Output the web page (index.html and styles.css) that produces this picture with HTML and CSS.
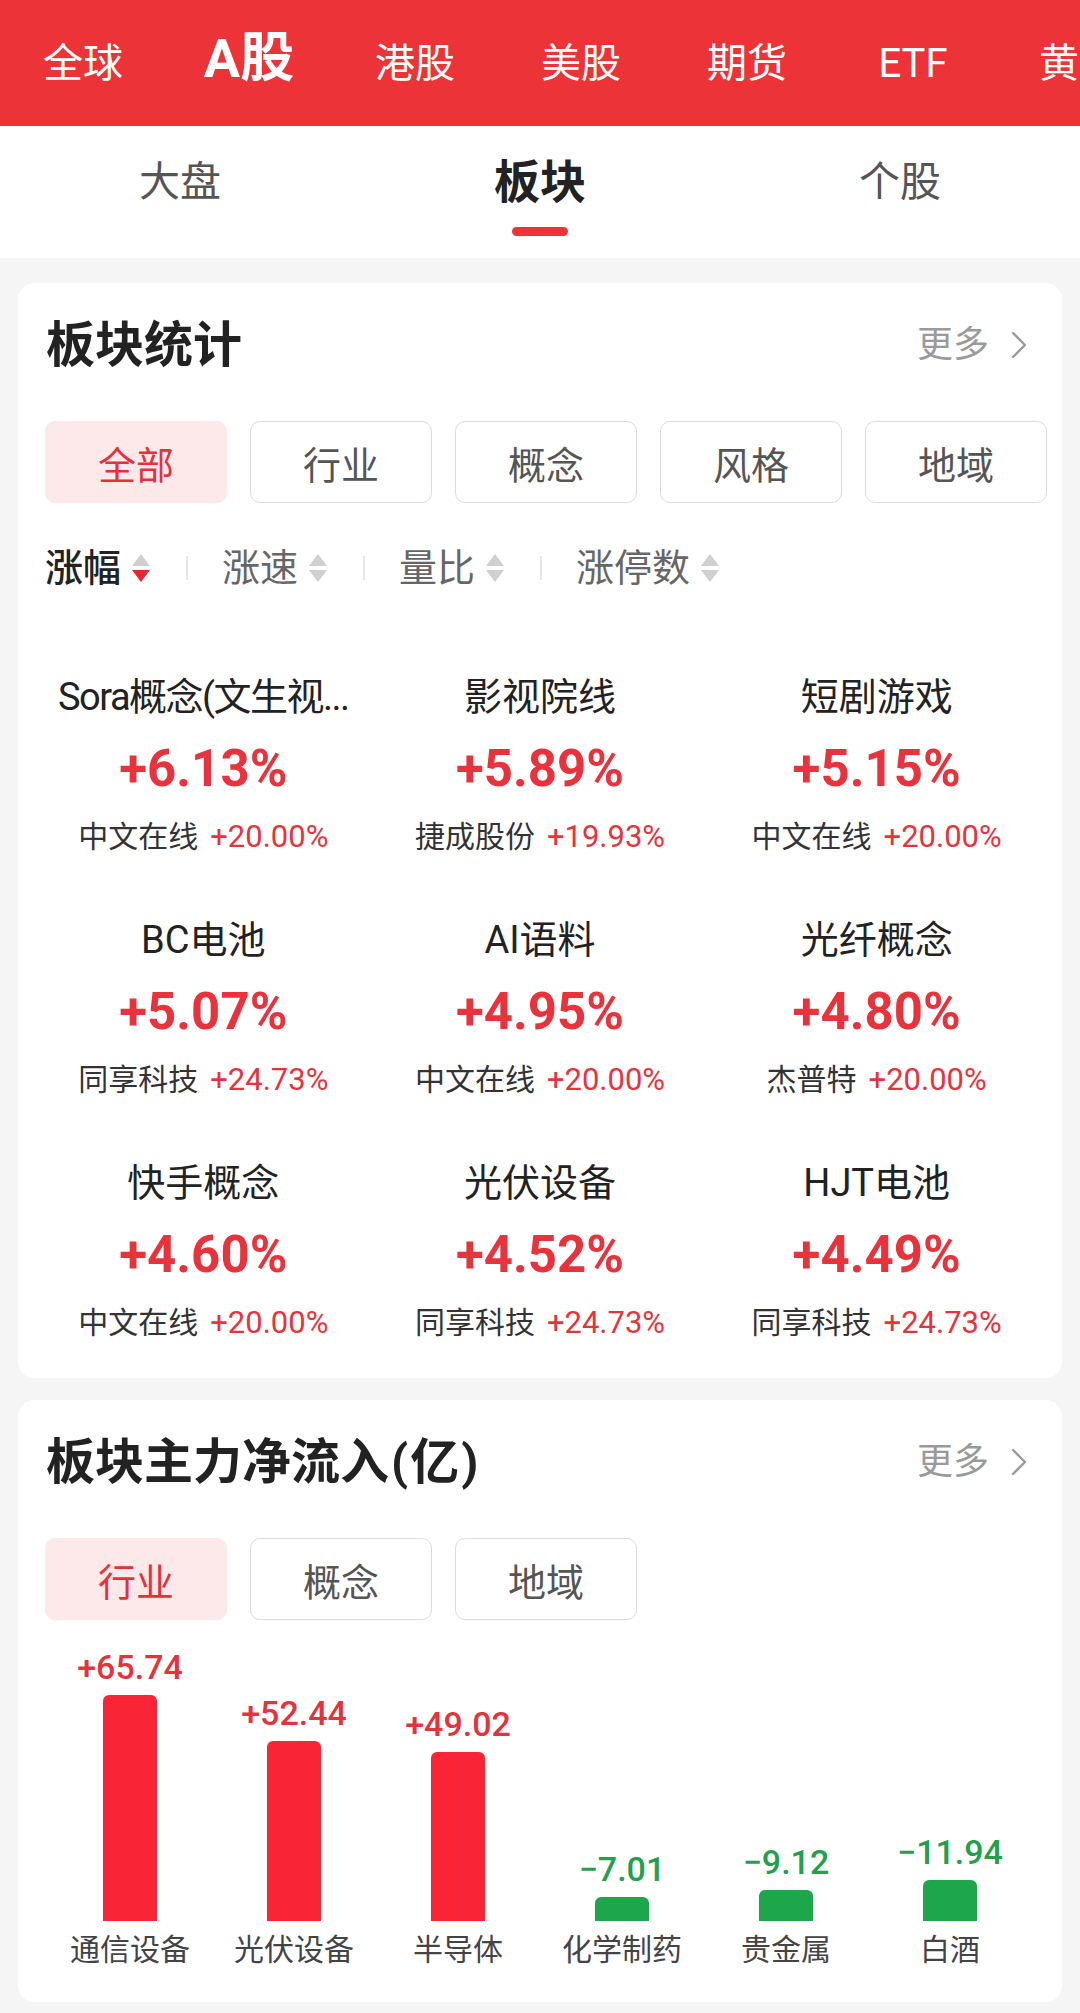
FILE: index.html
```html
<!DOCTYPE html>
<html lang="zh-CN">
<head>
<meta charset="utf-8">
<title>板块</title>
<link rel="stylesheet" href="styles.css">
</head>
<body>
<header class="market-tabs">
  <span class="mt">全球</span>
  <span class="mt mt-active">A股</span>
  <span class="mt">港股</span>
  <span class="mt">美股</span>
  <span class="mt">期货</span>
  <span class="mt">ETF</span>
  <span class="mt">黄金</span>
</header>

<nav class="sub-tabs">
  <div class="st"><span class="st-label">大盘</span></div>
  <div class="st st-active"><span class="st-label">板块</span><i class="st-bar"></i></div>
  <div class="st"><span class="st-label">个股</span></div>
</nav>

<section class="card">
  <div class="card-head">
    <h2 class="card-title">板块统计</h2>
    <span class="more">更多<svg class="chev" width="16" height="28" viewBox="0 0 16 28"><path d="M2 2 L14 14 L2 26" fill="none" stroke="#9a9a9a" stroke-width="2.4" stroke-linecap="round" stroke-linejoin="round"/></svg></span>
  </div>
  <div class="chips">
    <span class="chip chip-on">全部</span>
    <span class="chip">行业</span>
    <span class="chip">概念</span>
    <span class="chip">风格</span>
    <span class="chip">地域</span>
  </div>
  <div class="sorts">
    <span class="sort sort-on">涨幅<svg class="arrows" width="20" height="32" viewBox="0 0 20 32"><path d="M10 2 L19 14 L1 14 Z" fill="#cfcfcf"/><path d="M1 18 L19 18 L10 30 Z" fill="#e8262f"/></svg></span>
    <i class="sep"></i>
    <span class="sort">涨速<svg class="arrows" width="20" height="32" viewBox="0 0 20 32"><path d="M10 2 L19 14 L1 14 Z" fill="#cfcfcf"/><path d="M1 18 L19 18 L10 30 Z" fill="#cfcfcf"/></svg></span>
    <i class="sep"></i>
    <span class="sort">量比<svg class="arrows" width="20" height="32" viewBox="0 0 20 32"><path d="M10 2 L19 14 L1 14 Z" fill="#cfcfcf"/><path d="M1 18 L19 18 L10 30 Z" fill="#cfcfcf"/></svg></span>
    <i class="sep"></i>
    <span class="sort">涨停数<svg class="arrows" width="20" height="32" viewBox="0 0 20 32"><path d="M10 2 L19 14 L1 14 Z" fill="#cfcfcf"/><path d="M1 18 L19 18 L10 30 Z" fill="#cfcfcf"/></svg></span>
  </div>
  <div class="grid">
    <div class="cell"><span class="name name-tight">Sora概念(文生视...</span><span class="pct">+6.13%</span><span class="sub">中文在线<b>+20.00%</b></span></div>
    <div class="cell"><span class="name">影视院线</span><span class="pct">+5.89%</span><span class="sub">捷成股份<b>+19.93%</b></span></div>
    <div class="cell"><span class="name">短剧游戏</span><span class="pct">+5.15%</span><span class="sub">中文在线<b>+20.00%</b></span></div>
    <div class="cell"><span class="name">BC电池</span><span class="pct">+5.07%</span><span class="sub">同享科技<b>+24.73%</b></span></div>
    <div class="cell"><span class="name">AI语料</span><span class="pct">+4.95%</span><span class="sub">中文在线<b>+20.00%</b></span></div>
    <div class="cell"><span class="name">光纤概念</span><span class="pct">+4.80%</span><span class="sub">杰普特<b>+20.00%</b></span></div>
    <div class="cell"><span class="name">快手概念</span><span class="pct">+4.60%</span><span class="sub">中文在线<b>+20.00%</b></span></div>
    <div class="cell"><span class="name">光伏设备</span><span class="pct">+4.52%</span><span class="sub">同享科技<b>+24.73%</b></span></div>
    <div class="cell"><span class="name">HJT电池</span><span class="pct">+4.49%</span><span class="sub">同享科技<b>+24.73%</b></span></div>
  </div>
</section>

<section class="card">
  <div class="card-head">
    <h2 class="card-title">板块主力净流入<span class="paren">(</span>亿<span class="paren">)</span></h2>
    <span class="more">更多<svg class="chev" width="16" height="28" viewBox="0 0 16 28"><path d="M2 2 L14 14 L2 26" fill="none" stroke="#9a9a9a" stroke-width="2.4" stroke-linecap="round" stroke-linejoin="round"/></svg></span>
  </div>
  <div class="chips">
    <span class="chip chip-on">行业</span>
    <span class="chip">概念</span>
    <span class="chip">地域</span>
  </div>
  <div class="chart">
    <div class="bars">
      <div class="bcol up"><span class="bval">+65.74</span><i class="bar" style="height:226px"></i></div>
      <div class="bcol up"><span class="bval">+52.44</span><i class="bar" style="height:180px"></i></div>
      <div class="bcol up"><span class="bval">+49.02</span><i class="bar" style="height:169px"></i></div>
      <div class="bcol down"><span class="bval">−7.01</span><i class="bar" style="height:24px"></i></div>
      <div class="bcol down"><span class="bval">−9.12</span><i class="bar" style="height:31px"></i></div>
      <div class="bcol down"><span class="bval">−11.94</span><i class="bar" style="height:41px"></i></div>
    </div>
    <div class="cats">
      <span class="cat">通信设备</span>
      <span class="cat">光伏设备</span>
      <span class="cat">半导体</span>
      <span class="cat">化学制药</span>
      <span class="cat">贵金属</span>
      <span class="cat">白酒</span>
    </div>
  </div>
</section>
</body>
</html>
```

FILE: styles.css
```css
body {
  margin: 0 0 11px;
  background: #f5f5f5;
  font-family: Roboto, "Noto Sans CJK SC", sans-serif;
  color: #222;
}

/* top market tabs */
.market-tabs {
  display: flex;
  align-items: baseline;
  height: 126px;
  box-sizing: border-box;
  padding: 32px 0 0 0;
  background: #ec3338;
  color: #fff;
  overflow: hidden;
  white-space: nowrap;
}
.mt {
  flex: none;
  width: 166px;
  text-align: center;
  font-size: 40px;
  line-height: 1;
}
.mt-active {
  font-size: 54px;
  font-weight: 700;
}

/* second level tabs */
.sub-tabs {
  display: flex;
  height: 132px;
  background: #fff;
}
.st {
  flex: 1;
  display: flex;
  flex-direction: column;
  align-items: center;
  padding-top: 20px;
}
.st-label {
  height: 72px;
  display: flex;
  align-items: center;
  font-size: 41px;
  line-height: 1;
  color: #555;
}
.st-active .st-label {
  font-size: 46px;
  font-weight: 700;
  color: #222;
}
.st-bar {
  width: 56px;
  height: 9px;
  border-radius: 5px;
  background: #ec3338;
  margin-top: 9px;
}

/* cards */
.card {
  margin: 25px 18px 0;
  background: #fff;
  border-radius: 16px;
}
.card + .card {
  margin-top: 22px;
}
.card-head {
  display: flex;
  align-items: center;
  justify-content: space-between;
  padding: 38px 35px 0 28px;
  height: 48px;
}
.card-title {
  margin: 0;
  font-size: 49px;
  line-height: 1;
  font-weight: 700;
  color: #222;
}
.paren {
  margin: 0 2px;
}
.more {
  display: flex;
  align-items: center;
  font-size: 36px;
  line-height: 1;
  color: #9a9a9a;
}
.chev {
  margin-left: 22px;
}

.chips {
  display: flex;
  gap: 23px;
  padding: 0 0 0 27px;
  margin-top: 52px;
}
.chip {
  flex: none;
  width: 182px;
  height: 82px;
  box-sizing: border-box;
  border: 1.5px solid #dcdcdc;
  border-radius: 10px;
  display: flex;
  align-items: center;
  justify-content: center;
  font-size: 38px;
  color: #555;
}
.chip-on {
  background: #fde8ea;
  border-color: #fde8ea;
  color: #e4323b;
}

/* sort row */
.sorts {
  display: flex;
  align-items: center;
  height: 38px;
  padding: 0 27px;
  margin-top: 46px;
}
.sort {
  display: flex;
  align-items: center;
  font-size: 38px;
  line-height: 1;
  color: #666;
}
.sort-on {
  color: #222;
  font-weight: 500;
}
.arrows {
  margin-left: 10px;
}
.sep {
  width: 2px;
  height: 24px;
  background: #e6e6e6;
  margin: 0 34px 0 35px;
}

/* grid of sectors */
.grid {
  display: grid;
  grid-template-columns: repeat(3, 1fr);
  row-gap: 64px;
  padding: 91px 17px 35px;
}
.cell {
  display: flex;
  flex-direction: column;
  align-items: center;
}
.name {
  font-size: 38px;
  line-height: 38px;
  color: #222;
  white-space: nowrap;
}
.name-tight {
  letter-spacing: -1.5px;
}
.pct {
  margin-top: 28px;
  font-size: 51px;
  line-height: 50px;
  font-weight: 700;
  color: #e8333d;
}
.sub {
  margin-top: 23px;
  display: flex;
  align-items: baseline;
  gap: 12px;
  font-size: 30px;
  line-height: 40px;
  color: #333;
}
.sub b {
  font-weight: 400;
  font-size: 31px;
  color: #e8333d;
}

/* bar chart */
.chart {
  padding: 0 30px 37px;
  margin-top: 20px;
}
.bars {
  display: flex;
  align-items: flex-end;
  height: 281px;
}
.bcol {
  flex: 1;
  display: flex;
  flex-direction: column;
  align-items: center;
}
.bval {
  font-size: 34px;
  line-height: 34px;
  font-weight: 500;
  margin-bottom: 11px;
}
.bar {
  width: 54px;
  border-radius: 6px 6px 0 0;
}
.up .bval { color: #e5323d; }
.up .bar { background: #fa2437; }
.down .bval { color: #22a04b; }
.down .bar { background: #1da64a; }

.cats {
  display: flex;
  margin-top: 14px;
}
.cat {
  flex: 1;
  text-align: center;
  font-size: 30px;
  line-height: 30px;
  color: #444;
}
```
